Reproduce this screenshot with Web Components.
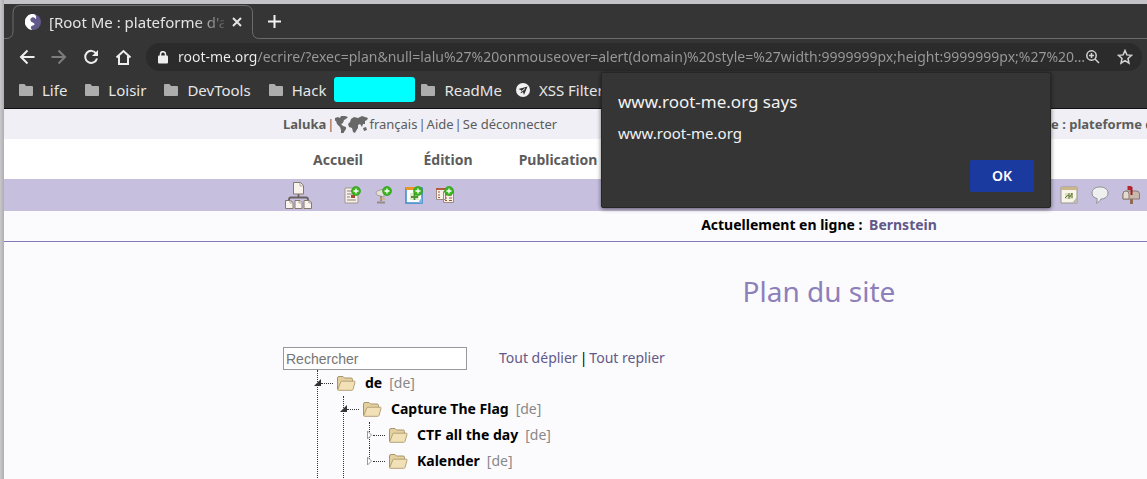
<!DOCTYPE html>
<html lang="fr">
<head>
<meta charset="utf-8">
<title>Plan du site</title>
<style>
html, body { margin: 0; height: 100%; }
body { overflow: hidden; font-family: "Noto Sans", "Open Sans", sans-serif; background: #fbfbfd; }
</style>
</head>
<body>
<browser-window>
  <tab-strip slot="chrome">[Root Me : plateforme d'app</tab-strip>
  <nav-bar slot="chrome"></nav-bar>
  <bookmark-bar slot="chrome">
    <bookmark-item>Life</bookmark-item>
    <bookmark-item>Loisir</bookmark-item>
    <bookmark-item>DevTools</bookmark-item>
    <bookmark-item>Hack</bookmark-item>
    <bookmark-item kind="masked"></bookmark-item>
    <bookmark-item>ReadMe</bookmark-item>
    <bookmark-item kind="send">XSS Filter</bookmark-item>
  </bookmark-bar>
  <alert-dialog slot="dialog">
    <span slot="title">www.root-me.org says</span>
    www.root-me.org
  </alert-dialog>
  <site-page>
    <user-bar slot="head"></user-bar>
    <main-nav slot="head"></main-nav>
    <quick-bar slot="head"></quick-bar>
    <online-bar slot="head"></online-bar>
    <page-title>Plan du site</page-title>
    <tree-search></tree-search>
    <tree-node open lang-code="de">de
      <tree-node slot="children" open lang-code="de">Capture The Flag
        <tree-node slot="children" lang-code="de">CTF all the day</tree-node>
        <tree-node slot="children" last lang-code="de">Kalender</tree-node>
      </tree-node>
    </tree-node>
  </site-page>
</browser-window>

<script>
function define(name, html) {
  const template = document.createElement('template');
  template.innerHTML = '<style>*{box-sizing:border-box}:host{display:block;box-sizing:border-box}button{font:inherit;border:0;background:none;padding:0;color:inherit}svg{display:block;flex:none}a{text-decoration:none;color:inherit}</style>' + html;
  customElements.define(name, class extends HTMLElement {
    constructor() {
      super();
      this.attachShadow({ mode: 'open' }).append(template.content.cloneNode(true));
    }
  });
}

define('browser-window', `
<style>
:host { display: flex; height: 100%; padding: 4px 0 0 4px; background: linear-gradient(90deg, #c9c9cc, #aeaeb2 4px, #c4c4c8 4px); overflow: hidden; }
.frame { flex: 1; min-width: 0; display: flex; flex-direction: column; position: relative; background: #353535; }
.page { flex: 1; min-height: 0; overflow: hidden; border-top: 1px solid #111; background: #fbfbfd; }
</style>
<div class="frame"><slot name="chrome"></slot><slot name="dialog"></slot><div class="page"><slot></slot></div></div>`);

define('tab-strip', `
<style>
:host { display: flex; height: 35px; color: #e4e4e4; font-size: 15px; }
.tab { position: relative; width: 258px; flex: none; display: flex; align-items: center; padding: 0 13px 0 21px; }
.outline { position: absolute; inset: 0; }
.title { width: 175px; margin-left: 8px; overflow: hidden; white-space: nowrap; line-height: 22px; -webkit-mask-image: linear-gradient(90deg, #000 145px, transparent 182px); }
.close { margin-left: 8px; }
.rest { flex: 1; border-bottom: 1px solid #6c6c6c; display: flex; align-items: center; padding-left: 6px; }
</style>
<div class="tab">
  <svg class="outline" width="258" height="35" fill="none" stroke="#6c6c6c"><path d="M0 34.5h2q7 0 7-7V9q0-7.500 7-7.500H241q7.500 0 7.500 7.500v18.500q0 7 7 7h3"/></svg>
  <svg width="16" height="16" viewBox="0 0 16 16"><circle cx="8" cy="8" r="8" fill="#62598a"/><path d="M9 0A8 8 0 0 0 1 12c1.500 2.500 4 4 6.500 4C5 14 5.500 12 8 11.500c2-.6 2-2-.2-3C5 7.500 4.500 4.500 7 3.500c1.500-.6 3 .3 4 1.700C11.500 3 11 1 9 0z" fill="#fff"/></svg>
  <span class="title"><slot></slot></span>
  <button class="close" aria-label="Close tab"><svg width="10" height="10" stroke="#e4e4e4" stroke-width="2"><path d="M1 1l8 8M9 1L1 9"/></svg></button>
</div>
<div class="rest"><button aria-label="New tab"><svg width="13" height="13" stroke="#f2f2f2" stroke-width="2"><path d="M6.500 0v13M0 6.500h13"/></svg></button></div>`);

define('nav-bar', `
<style>
:host { display: flex; align-items: center; height: 36px; padding: 0 5px 0 15px; color: #eee; }
.nav { display: flex; gap: 16px; margin-right: 14px; }
.box { flex: 1; min-width: 0; display: flex; align-items: center; height: 28px; border-radius: 14px; background: #2b2b2b; padding: 0 9px 0 12px; }
input { flex: 1; min-width: 0; margin: 0 0 0 10px; padding: 0; border: 0; outline: 0; font: 14px/22px "Noto Sans", sans-serif; color: transparent; background: linear-gradient(90deg, #f0f0f0 79px, #9a9a9a 79px); -webkit-background-clip: text; background-clip: text; }
.tools { display: flex; gap: 16px; }
</style>
<div class="nav">
  <button aria-label="Back"><svg width="16" height="16" fill="none" stroke="#eee" stroke-width="2"><path d="M15.500 8H2M8.500 1.500L2 8l6.500 6.500"/></svg></button>
  <button aria-label="Forward"><svg width="16" height="16" fill="none" stroke="#7d7d7d" stroke-width="2"><path d="M.5 8H14M7.500 1.500L14 8l-6.500 6.500"/></svg></button>
  <button aria-label="Reload"><svg width="16" height="16" fill="none" stroke="#eee" stroke-width="2"><path d="M13.200 4.500A6 6 0 1 0 14 9.500"/><path d="M15 1v6H9z" fill="#eee" stroke="none"/></svg></button>
  <button aria-label="Home"><svg width="17" height="16" fill="none" stroke="#eee" stroke-width="2"><path d="M1.500 8.500L8.500 2l7 6.500M4 7v8h9V7"/></svg></button>
</div>
<form class="box" onsubmit="return false">
  <svg width="10" height="13" viewBox="0 0 10 13"><rect y="4.500" width="10" height="8" rx="1" fill="#eee"/><path d="M2.500 5V3.200a2.500 2.500 0 0 1 5 0V5" fill="none" stroke="#eee" stroke-width="1.500"/></svg>
  <input aria-label="Address" spellcheck="false" value="root-me.org/ecrire/?exec=plan&amp;null=lalu%27%20onmouseover=alert(domain)%20style=%27width:9999999px;height:9999999px;%27%20…">
  <div class="tools">
    <button type="button" aria-label="Zoom"><svg width="16" height="16" fill="none" stroke="#d4d4d4" stroke-width="1.500"><circle cx="6.500" cy="6.500" r="4.700"/><path d="M10 10l4 4M4 6.500h5M6.500 4v5"/></svg></button>
    <button type="button" aria-label="Bookmark"><svg width="16" height="16" fill="none" stroke="#d4d4d4" stroke-width="1.500"><path d="M8 1.500l1.900 4.400 4.600.4L11 9.400l1 4.700-4-2.500-4 2.500 1-4.700L1.500 6.300l4.600-.4z"/></svg></button>
  </div>
</form>`);

define('bookmark-bar', `
<style>:host { display: flex; align-items: center; gap: 18px; height: 33px; padding: 0 15px 4px; overflow: hidden; }</style>
<slot></slot>`);

define('bookmark-item', `
<style>
:host { flex: none; }
a { display: flex; align-items: center; gap: 9px; color: #e6e6e6; font-size: 15px; line-height: 20px; white-space: nowrap; }
.mask, .send, :host([kind]) .folder { display: none; }
:host([kind="masked"]) { margin: 0 -12px 0 -10px; }
:host([kind="masked"]) a { display: none; }
:host([kind="masked"]) .mask { display: block; width: 81px; height: 25px; border-radius: 3px; background: #0ff; }
:host([kind="send"]) { margin-left: -4px; }
:host([kind="send"]) .send { display: block; }
</style>
<div class="mask"></div>
<a href="#"><svg class="folder" width="14" height="12"><path d="M1 0h4.500l1.500 2h6a1 1 0 0 1 1 1v8a1 1 0 0 1-1 1H1a1 1 0 0 1-1-1V1a1 1 0 0 1 1-1z" fill="#adadad"/></svg>
<svg class="send" width="14" height="14"><circle cx="7" cy="7" r="7" fill="#f2f2f2"/><path d="M2.500 6L11.500 3.500 8 12 7 9 4.500 10.500 5.500 7.500z" fill="#333"/><path d="M5.500 8.500l3.500-3" stroke="#f2f2f2"/></svg><slot></slot></a>`);

define('alert-dialog', `
<style>
:host { position: absolute; z-index: 2; left: 597px; top: 68px; width: 450px; padding: 17px 16px 15px; background: #353535; border: 1px solid #262626; border-radius: 2px; box-shadow: 0 1px 4px rgba(0,0,0,.55); color: #f2f2f2; font-size: 15px; line-height: 22px; }
h2 { margin: 0 0 8px; font-size: 17px; font-weight: 400; line-height: 24px; }
p { margin: 0 0 16px; }
button { display: block; margin-left: auto; width: 64px; height: 32px; border-radius: 2px; background: #1a3aa0; color: #fff; font-size: 14px; font-weight: 600; }
</style>
<h2><slot name="title"></slot></h2><p><slot></slot></p><button>OK</button>`);

define('site-page', `
<style>
:host { min-width: 1630px; color: #000; font-size: 14px; }
.content { width: 1072px; margin: 0 auto; }
</style>
<slot name="head"></slot><div class="content"><slot></slot></div>`);

define('user-bar', `
<style>
:host { background: #efeff5; color: #5c5c5c; }
.in { width: 1072px; height: 30px; margin: 0 auto; display: grid; grid-template-columns: 1fr 350px; align-items: center; font-size: 13px; white-space: nowrap; }
.left { display: flex; align-items: center; gap: 1px; }
svg { opacity: .9; }
</style>
<div class="in"><div class="left"><a href="#"><b>Laluka</b></a><span>|</span>
<svg width="33" height="18" viewBox="0 0 33 18" fill="#5a5a5a"><path d="M0 3l3-1 2 1 1-2 4 0 3 1-2 2-2 1-1 3-2 1 2 2 3 1 0 2-2 3-1 3-2-1 0-4-1-3-3-3-1-3-3-1z"/><path d="M15 7l1-3 3-2 4 1 4-2 6 2-1 2-2 1 0 3-2 0-1 3-2-3-2 1 0 3-2 3-1 2-2-1-1-4-3-1-1-3z"/><path d="M28 13l3-1 1 3-3 1z"/></svg>
<a href="#">français</a><span>|</span><a href="#">Aide</a><span>|</span><a href="#">Se déconnecter</a></div>
<b>Root Me : plateforme d'apprentissage</b></div>`);

define('main-nav', `
<style>
:host { background: #fff; color: #5c5c5c; }
nav { width: 1072px; height: 40px; margin: 0 auto; display: flex; align-items: center; }
a { width: 110px; text-align: center; font-weight: 700; font-size: 14px; }
</style>
<nav><a href="#">Accueil</a><a href="#">Édition</a><a href="#">Publication</a></nav>`);

const plus = '<circle cx="13" cy="5" r="4.500" fill="#3cb521" stroke="#2a9414" stroke-width=".6"/><path d="M13 2.500v5M10.500 5h5" stroke="#fff" stroke-width="1.300"/>';
define('quick-bar', `
<style>
:host { background: #c6bfde; }
.in { width: 1072px; height: 32px; margin: 0 auto; padding-left: 2px; display: grid; grid-template-columns: 58px 1fr 295px; align-items: center; }
.g { display: flex; gap: 13px; }
</style>
<div class="in">
<a href="#" aria-label="Plan du site"><svg width="27" height="27" viewBox="0 0 27 27"><path d="M13.500 12v4M4 20v-2.500q0-2 2-2h15q2 0 2 2V20" fill="none" stroke="#6b6060" stroke-width="1.800"/><g fill="#f8f3ec" stroke="#857870"><path d="M8.500.5h7l3 3v8.500h-10z"/><path d="M.5 18.500h5l2.500 2v6H.5zM10 18.500h5l2 2v6h-7zM19 18.500h5l2.500 2v6H19z"/></g><path d="M15 1v3h3M5 19v2h2M14 19v2h2M24 19v2h2" fill="none" stroke="#b3a79e"/></svg></a>
<div class="g">
<a href="#" aria-label="Article"><svg width="18" height="18"><path d="M2 2h13v15H2z" fill="#f6f1e8" stroke="#a3978b"/><path d="M4 5h5M4 8h9M4 11h3M4 14h9" stroke="#8d8178"/><path d="M8 9h4v3H8z" fill="#a54836"/>${plus}</svg></a>
<a href="#" aria-label="Auteur"><svg width="18" height="18"><path d="M3 5l7-2v8L3 9q-2-2 0-4z" fill="#e4e0dc" stroke="#aaa29c"/><path d="M7 10v5M3 16.500h8" stroke="#988c82" stroke-width="2"/><path d="M6 13h5" stroke="#dda54d"/>${plus}</svg></a>
<a href="#" aria-label="Image"><svg width="18" height="18"><path d="M1 2h16v15H1z" fill="#fff" stroke="#3a89c9" stroke-width="1.500"/><path d="M1 1h14v3H1z" fill="#e7962a"/><path d="M5 7h9v7H5z" fill="#dceccb"/><path d="M6 11h7M9.500 7v7" stroke="#4e9434" fill="none" stroke-width="1.800"/><path d="M17 11l-4 6h4z" fill="#78b8e7"/>${plus}</svg></a>
<a href="#" aria-label="Rubrique"><svg width="18" height="18"><path d="M.5 2.500h9v11h-9zM7.500 5.500h10v11h-10z" fill="#f6f1e8" stroke="#9a8c80"/><path d="M0 3h9" stroke="#b65a40" stroke-width="2"/><path d="M2 6h2M2 9h2M2 11.500h2M9 9h2M13 9h3M9 12h2M13 12h3M9 14.500h2M13 14.500h3" stroke="#a4523b"/>${plus}</svg></a>
</div>
<div class="g">
<a href="#" aria-label="Documents"><svg width="18" height="18"><path d="M1 1h16v16H1z" fill="#f8f5ea" stroke="#9b958c"/><path d="M1 1h16v3H1z" fill="#c9b78a"/><path d="M5 7h8v6H5z" fill="#d8e0b5"/><path d="M5 12l3-3 2 2 2-4v5M9 7v6" stroke="#66764a" fill="none"/><path d="M17 11l-5 6h5z" fill="#bfbab0"/></svg></a>
<a href="#" aria-label="Forum"><svg width="18" height="18"><path d="M9 1c5 0 8 2.500 8 6s-3 6-7 6c-1 2-3 4-5 4 1-1 1.500-3 1-4.500C3 12 1 10 1 7c0-3.500 3-6 8-6z" fill="#eef0f0" stroke="#8f8f94"/></svg></a>
<a href="#" aria-label="Messages"><svg width="18" height="18"><path d="M1 8q0-3 3-3h10q3.500 0 3.500 3v5H1z" fill="#c8b8ac" stroke="#8a7a72"/><path d="M1 8q0-3 3-3t3 3v5H1z" fill="#e5dad0" stroke="#8a7a72"/><path d="M8 13h3v5H8z" fill="#8e6c52"/><path d="M9.500 9V1" stroke="#9b1d22" stroke-width="2"/><path d="M5.500 0h4v4h-4z" fill="#b9232c"/></svg></a>
</div></div>`);

define('online-bar', `
<style>
:host { height: 31px; border-bottom: 1px solid #8578b8; text-align: center; font-weight: 700; line-height: 28px; font-size: 14px; }
a { color: #62598a; margin-left: 3px; }
</style>
Actuellement en ligne : <a href="#">Bernstein</a>`);

define('page-title', `
<style>h1 { margin: 30px 0 36px; text-align: center; font-size: 28px; line-height: 39px; font-weight: 400; color: #8d7fba; }</style>
<h1><slot></slot></h1>`);

define('tree-search', `
<style>
:host { display: flex; align-items: center; color: #000; font-size: 14px; line-height: 20px; }
input { width: 184px; height: 23px; margin-right: 32px; padding: 0 2px; border: 1px solid #999; background: #fff; font: 14px "Liberation Sans", Arial, sans-serif; }
input::placeholder { color: #757575; opacity: 1; }
a { color: #62598a; }
.links { display: flex; gap: 2px; margin-top: -2px; }
</style>
<input type="text" aria-label="Rechercher" placeholder="Rechercher"><div class="links"><a href="#">Tout déplier</a><span>|</span><a href="#">Tout replier</a></div>`);

class TreeNode extends HTMLElement {
  constructor() {
    super();
    this.attachShadow({ mode: 'open' }).innerHTML = `
<style>
:host { display: block; position: relative; padding-left: 26px; font-size: 14px; line-height: 20px; white-space: nowrap; }
:host(:not([slot])) { padding-left: 31px; }
.line { position: absolute; width: 0; top: 0; bottom: 0; margin-left: 3px; border-left: 1px dotted #333; }
:host([open]:not([last])) .line { bottom: -80px; }
:host([last]) .line { bottom: 13px; }
.row { display: flex; align-items: center; height: 26px; position: relative; }
.toggle { flex: none; width: 7px; height: 10px; padding: 0; border: 0; background: none; display: block; }
svg { display: block; flex: none; }
.dots { width: 12px; margin: 0 4px 0 0; border-top: 1px dotted #333; }
a { color: #000; font-weight: 700; margin: 0 7px 0 9px; text-decoration: none; }
.lang { color: #888; }
.closed, :host([open]) .opened { display: block; }
.opened, :host([open]) .closed { display: none; }
</style>
<div class="line"></div>
<div class="row"><button class="toggle" aria-label="Basculer">
<svg class="opened" width="7" height="8"><path d="M7 0v7H0z" fill="#333"/></svg>
<svg class="closed" width="7" height="10"><path d="M1.500 1l4 4-4 4z" fill="#fff" stroke="#999"/></svg></button><span class="dots"></span>
<svg width="19" height="15" viewBox="0 0 19 15"><path d="M.5 13.500V2q0-1.500 1.500-1.500h4L7.500 2H14q1.500 0 1.500 1.500V6" fill="#e5d0a0" stroke="#a8946b"/><path d="M.7 14l3-8q.3-.8 1.200-.8h12.300q1.200 0 .8 1.200l-2 7q-.3.900-1.200.9H1.500q-.8 0-.8-.3z" fill="#f2e0b6" stroke="#b6a278"/></svg>
<a href="#"><slot></slot></a><span class="lang"></span></div>
<slot name="children"></slot>`;
  }
  connectedCallback() {
    this.shadowRoot.querySelector('.lang').textContent = '[' + this.getAttribute('lang-code') + ']';
  }
}
customElements.define('tree-node', TreeNode);
</script>
</body>
</html>
